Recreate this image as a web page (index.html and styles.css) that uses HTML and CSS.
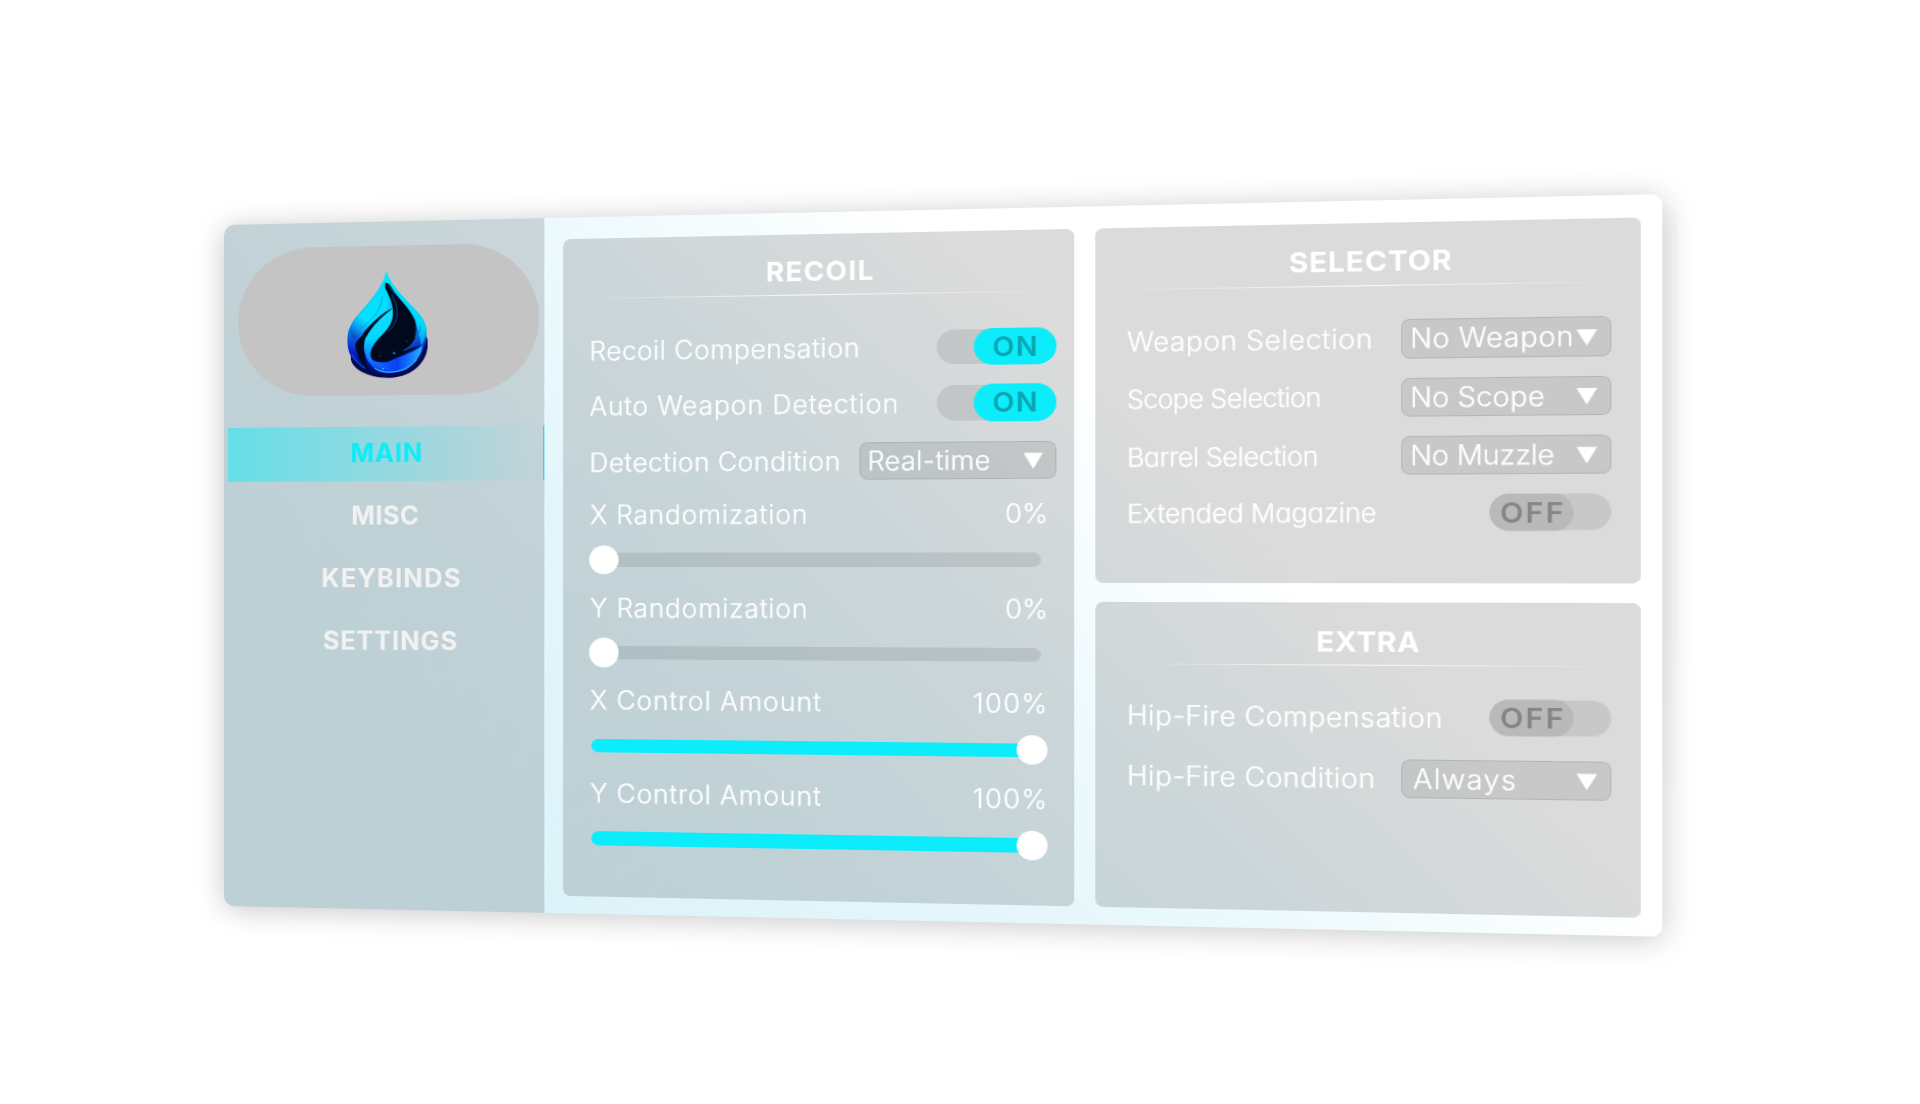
FILE: index.html
```html
<!DOCTYPE html>
<html lang="en">
<head>
<meta charset="utf-8">
<title>Recoil settings</title>
<link rel="stylesheet" href="styles.css">
</head>
<body>
<div class="stage">
  <div class="window">
    <aside class="sidebar">
      <div class="logo">
        <svg class="drop" viewBox="50 35 246 323" preserveAspectRatio="none" aria-hidden="true">
          <defs>
            <linearGradient id="body" x1="0" y1="0" x2="0" y2="1">
              <stop offset="0" stop-color="#00eaff"/><stop offset=".42" stop-color="#00c4f5"/><stop offset=".68" stop-color="#0a50d8"/><stop offset=".82" stop-color="#0618c0"/><stop offset="1" stop-color="#00095c"/>
            </linearGradient>
            <linearGradient id="leaf" x1=".7" y1="0" x2=".2" y2="1">
              <stop offset="0" stop-color="#00dcff"/><stop offset=".65" stop-color="#06e2ff"/><stop offset=".85" stop-color="#0a9df2"/><stop offset="1" stop-color="#0a4fc4"/>
            </linearGradient>
            <linearGradient id="swirl" x1="0" y1="0" x2="0" y2="1">
              <stop offset="0" stop-color="#17dcff"/><stop offset=".45" stop-color="#00d8ff"/><stop offset=".7" stop-color="#128cff"/><stop offset="1" stop-color="#0b3cf0"/>
            </linearGradient>
            <linearGradient id="bowl" x1="0" y1="0" x2="1" y2="0">
              <stop offset="0" stop-color="#0f6dff"/><stop offset=".5" stop-color="#0a3ff5"/><stop offset="1" stop-color="#20b4ff"/>
            </linearGradient>
            <linearGradient id="rim" x1="0" y1="0" x2="0" y2="1">
              <stop offset="0" stop-color="#00eaff"/><stop offset=".75" stop-color="#00d4fa"/><stop offset="1" stop-color="#0a90e8"/>
            </linearGradient>
          </defs>
          <path fill="#02094f" d="M62 292C58 325 110 357 175 357C240 357 290 320 295 262C296 250 295 238 288 232L90 262Z"/>
          <path fill="url(#body)" d="M170 36C178 66 205 98 240 135C270 165 291 188 291 218C293 255 282 290 240 322C200 348 120 350 80 312C52 290 50 255 52 228C55 190 90 160 115 130C145 96 160 70 170 36Z"/>
          <path fill="url(#rim)" d="M170 36C178 66 205 98 240 135C270 165 291 188 291 218C290 236 282 250 276 262L262 200L176 76L164 60Z"/>
          <path fill="url(#leaf)" d="M164 66C150 96 128 120 103 150C75 178 60 196 62 222C63 244 78 246 90 232C108 205 142 176 172 150C180 122 174 90 164 66Z"/>
          <path fill="#000a1c" d="M166 72C174 68 180 76 186 86C208 122 240 146 257 185C266 212 264 250 230 274C250 268 262 262 274 262C240 282 200 296 172 308C140 312 118 300 118 278C116 250 150 236 172 210C198 182 196 140 166 86Z"/>
          <path fill="#00091f" d="M188 148C170 154 120 192 98 226C84 244 74 246 76 262C80 292 96 318 118 336C94 286 104 250 128 214C146 186 168 168 188 148Z"/>
          <path fill="url(#swirl)" d="M188 150C160 168 124 202 106 238C94 272 110 318 150 340C172 346 210 344 238 330C190 338 150 326 128 304C112 282 130 254 152 232C180 208 192 180 188 150Z"/>
          <path fill="url(#bowl)" d="M128 304C148 312 166 312 180 308C210 292 250 284 278 262C280 282 264 308 236 328C194 346 148 334 128 304Z"/>
          <path fill="none" stroke="#2fd0ff" stroke-width="3" d="M134 328C168 350 230 342 262 304"/>
          <path fill="none" stroke="#0b6fd8" stroke-width="2" d="M176 78C198 112 238 140 256 184C262 206 262 222 256 236M186 106C204 140 208 172 194 196C188 208 180 214 176 218"/>
          <path fill="none" stroke="#0485c9" stroke-width="2" d="M157 112C156 150 130 182 84 212"/>
          <path fill="none" stroke="#0a73e6" stroke-width="3" d="M222 276C252 262 268 232 274 200M66 286C76 306 90 318 106 328"/>
          <circle cx="193" cy="283" r="4" fill="#0a63d6"/><circle cx="150" cy="290" r="2" fill="#0a63d6"/><circle cx="232" cy="248" r="2" fill="#0a63d6"/>
          <circle cx="160" cy="330" r="2" fill="#fff"/>
        </svg>
      </div>
      <nav class="nav">
        <a class="nav-item active"><span class="n-main">MAIN</span></a>
        <a class="nav-item"><span class="n-misc">MISC</span></a>
        <a class="nav-item"><span class="n-keys">KEYBINDS</span></a>
        <a class="nav-item"><span class="n-set">SETTINGS</span></a>
      </nav>
    </aside>
    <main class="content">
      <section class="panel recoil">
        <h2 class="t-recoil">RECOIL</h2>
        <div class="row row-1"><span class="ls-4">Recoil Compensation</span><div class="toggle on"><b>ON</b></div></div>
        <div class="row row-2"><span class="ls-75">Auto Weapon Detection</span><div class="toggle on"><b>ON</b></div></div>
        <div class="row row-3"><span class="ls-35">Detection Condition</span><div class="select"><span class="ls-3">Real-time</span><i></i></div></div>
        <div class="field">
          <div class="field-head"><span class="ls-7">X Randomization</span><span class="ls-3">0%</span></div>
          <div class="track"><i class="knob"></i></div>
        </div>
        <div class="field">
          <div class="field-head"><span class="ls-7">Y Randomization</span><span class="ls-3">0%</span></div>
          <div class="track"><i class="knob"></i></div>
        </div>
        <div class="field">
          <div class="field-head"><span class="ls-8">X Control Amount</span><span class="ls-11">100%</span></div>
          <div class="track full"><i class="knob"></i></div>
        </div>
        <div class="field">
          <div class="field-head"><span class="ls-8">Y Control Amount</span><span class="ls-11">100%</span></div>
          <div class="track full"><i class="knob"></i></div>
        </div>
      </section>
      <div class="column">
        <section class="panel selector">
          <h2 class="t-selector">SELECTOR</h2>
          <div class="row"><span class="ls-4">Weapon Selection</span><div class="select"><span class="ls-4">No Weapon</span><i></i></div></div>
          <div class="row"><span class="round tight-6">Scope Selection</span><div class="select"><span class="ls-1">No Scope</span><i></i></div></div>
          <div class="row"><span class="round tight-4">Barrel Selection</span><div class="select"><span class="ls-0">No Muzzle</span><i></i></div></div>
          <div class="row row-mag"><span class="round tight-2">Extended Magazine</span><div class="toggle off"><b>OFF</b></div></div>
        </section>
        <section class="panel extra">
          <h2 class="t-extra">EXTRA</h2>
          <div class="row"><span class="ls-35">Hip-Fire Compensation</span><div class="toggle off"><b>OFF</b></div></div>
          <div class="row"><span class="ls-35">Hip-Fire Condition</span><div class="select"><span class="ls-11 indent">Always</span><i></i></div></div>
        </section>
      </div>
    </main>
  </div>
</div>
</body>
</html>
```
FILE: styles.css
```css
* { box-sizing: border-box; }

body {
  display: flow-root;
  margin: 0;
  height: 1104px;
  overflow: hidden;
  background: #fff;
  color: #fff;
  font: 300 25px/30px Inter, "Liberation Sans", sans-serif;
}

/* The window is turned slightly, so that its right side is nearer */
.stage {
  position: relative;
  width: 1318.6px;
  height: 681px;
  margin: 225.2px 0 0 223.6px;
  transform-origin: 0 50%;
  transform: matrix3d(1, 0, 0, -0.0000629, 0, 1, 0, 0, 0, 0, 1, 0, 0, 0, 0, 1);
}

/* faint stacked edges behind the right side */
.stage::before,
.stage::after {
  content: "";
  position: absolute;
  z-index: -1;
  width: 60px;
  border-radius: 0 10px 10px 0;
}
.stage::before {
  top: 10px;
  bottom: 60px;
  right: -13px;
  background: linear-gradient(rgba(0, 0, 0, .016), rgba(0, 0, 0, .015) 60%, transparent);
}
.stage::after {
  top: 28px;
  bottom: 80px;
  right: -25px;
  background: linear-gradient(rgba(0, 0, 0, .008), rgba(0, 0, 0, .008) 60%, transparent);
}

.window {
  display: flex;
  width: 100%;
  height: 100%;
  overflow: hidden;
  border-radius: 10px;
  background: linear-gradient(45deg, #dcf3f9 14%, #e2f5fb 34%, #edfafd 50%, #fff 67%);
  box-shadow: 0 3px 28px rgba(0, 0, 0, .22);
}

.sidebar {
  width: 313.5px;
  background: rgba(0, 0, 0, .14);
}

.logo {
  display: flex;
  justify-content: center;
  width: 295.6px;
  height: 148.4px;
  margin: 23.9px 0 0 13.6px;
  padding-top: 25.4px;
  border-radius: 74px;
  background: #c4c4c4;
}
.drop { width: 79.5px; height: 106px; }

.nav {
  display: flex;
  flex-direction: column;
  gap: 7.8px;
  margin: 30.5px 0 0 3.5px;
}
.nav-item {
  display: flex;
  align-items: center;
  justify-content: center;
  height: 54px;
  color: #f2f2f2;
  font-weight: 700;
}
.nav-item.active {
  color: #0cecfa;
  border-right: 1px solid #35bfe0;
  background: linear-gradient(90deg, rgba(12, 236, 250, .5), rgba(12, 236, 250, 0));
}
.nav-item span { margin-top: -1px; }
.nav-item .n-main { padding-left: 6px; margin-top: -2px; letter-spacing: .75px; }
.n-misc { padding-left: 2px; letter-spacing: .3px; }
.n-keys { letter-spacing: 1.1px; padding-left: 14px; }
.n-set { letter-spacing: .8px; padding-left: 12px; }

.content {
  display: flex;
  gap: 19.3px;
  padding: 21px 17.4px 17.3px 18.8px;
}
.column {
  display: flex;
  flex-direction: column;
  gap: 17.9px;
}
.panel {
  width: 474.8px;
  border-radius: 7px;
  background: rgba(0, 0, 0, .14);
}
.recoil { padding: 0 16.3px 0 24px; }
.selector { height: 336.1px; padding: 0 25.2px 0 27px; }
.extra { height: 288.6px; padding: 0 25.2px 0 27px; }

h2 {
  height: 59.2px;
  padding-top: 20px;
  font-size: 26px;
  line-height: 32px;
  font-weight: 700;
  text-align: center;
  background: linear-gradient(90deg, transparent, rgba(255, 255, 255, .85) 50%, transparent) bottom / 100% 1.4px no-repeat;
}
.t-recoil { margin: 0 -10px 24.8px -18px; padding-left: 10px; letter-spacing: 1.15px; }
.t-selector { margin: 0 -15px 22.2px -17px; padding-left: 11px; letter-spacing: .8px; }
.t-extra { margin: 0 -15px 18.6px -17px; padding-left: 7px; padding-top: 21px; letter-spacing: .5px; }

.row {
  display: flex;
  align-items: center;
  justify-content: space-between;
  height: 54.2px;
  white-space: nowrap;
}
.row > span { padding-left: 1px; }
.row span,
.field-head span { -webkit-text-stroke: .25px #fff; }
.row-1 { height: 53px; }
.row-2 { height: 54px; }
.row-3 { height: 55.8px; }
.row-mag { height: 52.8px; }
.extra .row { height: 57.5px; }

.ls-0 { letter-spacing: -.2px; }
.ls-1 { letter-spacing: .1px; }
.ls-3 { letter-spacing: .25px; }
.ls-35 { letter-spacing: .37px; }
.ls-4 { letter-spacing: .43px; }
.ls-7 { letter-spacing: .7px; }
.ls-75 { letter-spacing: .75px; }
.ls-8 { letter-spacing: .82px; }
.ls-11 { letter-spacing: 1.1px; }
.indent { padding-left: 2.5px; }

.round { padding-top: 1.5px; font-size: 24px; font-feature-settings: "cv11"; }
.tight-6 { letter-spacing: -.62px; }
.tight-4 { letter-spacing: -.45px; }
.tight-2 { letter-spacing: -.2px; }

.toggle {
  display: flex;
  align-items: center;
  height: 33.7px;
  border-radius: 17px;
  background: rgba(0, 0, 0, .085);
}
.toggle b {
  height: 35.6px;
  margin: -1px 0;
  border-radius: 18px;
  font-size: 26px;
  line-height: 35px;
  font-weight: 600;
  text-align: center;
}
.toggle.on { width: 109.2px; justify-content: flex-end; }
.toggle.on b { width: 74.5px; padding-left: 1px; background: #0cecfa; color: #0aa5b0; letter-spacing: 1.2px; }
.toggle.off { width: 104px; }
.toggle.off b { width: 72px; padding-left: 2.5px; background: rgba(0, 0, 0, .075); color: #858585; letter-spacing: 1.8px; }

.select {
  display: flex;
  align-items: center;
  justify-content: space-between;
  width: 180.3px;
  height: 36.2px;
  padding: 0 11px 0 7px;
  border: 1px solid rgba(0, 0, 0, .09);
  border-radius: 8px;
  background: rgba(0, 0, 0, .085);
}
.select i {
  width: 17.6px;
  height: 15.2px;
  margin: 2px 0 0 -8px;
  background: #fff;
  clip-path: polygon(0 0, 100% 0, 50% 100%);
}

.field { height: 90.8px; }
.field-head {
  display: flex;
  align-items: center;
  justify-content: space-between;
  height: 46px;
  padding: 0 7px 0 1.5px;
}
.track {
  display: flex;
  align-items: center;
  width: 418.2px;
  height: 13.6px;
  margin: 14.2px 0 0 2.8px;
  border-radius: 7px;
  background: rgba(0, 0, 0, .09);
}
.track.full { justify-content: flex-end; background: #0cecfa; }
.knob {
  width: 28.4px;
  height: 28.2px;
  margin: 0 -5.8px 0 -2.3px;
  border-radius: 50%;
  background: #fff;
}
```
